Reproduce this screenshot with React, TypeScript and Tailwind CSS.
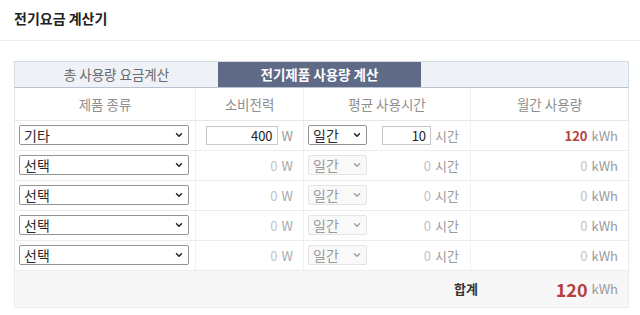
import { ChevronDown } from 'lucide-react';

const font = { fontFamily: '"Noto Sans CJK KR", "Noto Sans", sans-serif' };

type Row = { name: string; watt: number; hours: number; total: number; active: boolean };

const rows: Row[] = [
  { name: '기타', watt: 400, hours: 10, total: 120, active: true },
  { name: '선택', watt: 0, hours: 0, total: 0, active: false },
  { name: '선택', watt: 0, hours: 0, total: 0, active: false },
  { name: '선택', watt: 0, hours: 0, total: 0, active: false },
  { name: '선택', watt: 0, hours: 0, total: 0, active: false },
];

function Select({ value, width, disabled }: { value: string; width: string; disabled?: boolean }) {
  return (
    <div className={`relative ${width}`}>
      <select
        disabled={disabled}
        defaultValue={value}
        className={`w-full h-[20px] appearance-none rounded-[2px] border pl-[4px] text-[14px] leading-[18px] outline-none ${
          disabled ? 'border-[#e4e4e4] bg-[#f9f9f9] text-[#9a9a9a]' : 'border-[#939393] bg-white text-[#2a2a2a]'
        }`}
      >
        <option>{value}</option>
      </select>
      <ChevronDown
        className={`pointer-events-none absolute right-[5px] top-[5px] h-[10px] w-[10px] ${disabled ? 'text-[#a0a0a0]' : 'text-[#222]'}`}
        strokeWidth={3.5}
      />
    </div>
  );
}

export default function App() {
  return (
    <div className="w-[640px] h-[315px] bg-white" style={font}>
      {/* Title */}
      <div className="h-[41px] border-b border-[#eeeeee] px-[14px] pt-[7px]">
        <h1 className="text-[14px] font-bold leading-[22px] text-[#222]">전기요금 계산기</h1>
      </div>

      <div className="ml-[14px] mt-[20px] w-[615px]">
        {/* Tabs */}
        <div className="flex h-[27px] border border-b-[#b9c2d0] border-[#d5dbe4] bg-[#eef2f7]">
          <div className="flex w-[203px] items-center justify-center text-[13.5px] text-[#6a6a6a]">총 사용량 요금계산</div>
          <div className="flex w-[203px] items-center justify-center bg-[#5f6b86] text-[13.5px] font-bold text-white">
            전기제품 사용량 계산
          </div>
          <div className="flex-1" />
        </div>

        {/* Header */}
        <div className="grid h-[33px] grid-cols-[181px_108px_167px_1fr] border-x border-b border-[#e6e6e6] text-[13.5px] text-[#8f8f8f]">
          <div className="flex items-center justify-center border-r border-[#efefef]">제품 종류</div>
          <div className="flex items-center justify-center border-r border-[#efefef]">소비전력</div>
          <div className="flex items-center justify-center border-r border-[#efefef]">평균 사용시간</div>
          <div className="flex items-center justify-center">월간 사용량</div>
        </div>

        {/* Rows */}
        {rows.map((r, i) => (
          <div
            key={i}
            className="grid h-[30px] grid-cols-[181px_108px_167px_1fr] border-x border-b border-[#ececec] text-[13px]"
          >
            <div className="flex items-center border-r border-[#f1f1f1] pl-[4px]">
              <Select value={r.name} width="w-[170px]" disabled={false} />
            </div>
            <div className="flex items-center justify-end gap-[6px] border-r border-[#f1f1f1] pr-[10px]">
              {r.active ? (
                <input
                  defaultValue={r.watt}
                  className="h-[19px] w-[72px] border border-[#c8c8c8] px-[4px] text-right text-[13px] text-[#222] outline-none"
                />
              ) : (
                <span className="text-[#c4c4c4]">{r.watt}</span>
              )}
              <span className={`${r.active ? 'text-[#9a9a9a]' : 'text-[#aaa]'} -ml-[2px]`}>W</span>
            </div>
            <div className="flex items-center border-r border-[#f1f1f1] pl-[4px] pr-[11px]">
              <Select value="일간" width="w-[59px]" disabled={!r.active} />
              <div className="ml-auto flex items-center gap-[4px]">
                {r.active ? (
                  <input
                    defaultValue={r.hours}
                    className="h-[19px] w-[49px] border border-[#c8c8c8] px-[4px] text-right text-[13px] text-[#222] outline-none"
                  />
                ) : (
                  <span className="text-[#c4c4c4]">{r.hours}</span>
                )}
                <span className="text-[#9a9a9a]">시간</span>
              </div>
            </div>
            <div className="flex items-center justify-end gap-[4px] pr-[10px]">
              <span className={r.active ? 'font-bold text-[#b5413d]' : 'text-[#c4c4c4]'}>{r.total}</span>
              <span className="text-[#9a9a9a]">kWh</span>
            </div>
          </div>
        ))}

        {/* Total */}
        <div className="grid h-[37px] grid-cols-[463px_1fr] border-x border-b border-[#ececec] bg-[#f7f7f7]">
          <div className="flex items-center justify-end text-[13px] font-bold text-[#333]">합계</div>
          <div className="flex items-center justify-end gap-[4px] pr-[10px]">
            <span className="text-[18px] font-bold text-[#b5413d]">120</span>
            <span className="text-[13px] text-[#9a9a9a]">kWh</span>
          </div>
        </div>
      </div>
    </div>
  );
}
